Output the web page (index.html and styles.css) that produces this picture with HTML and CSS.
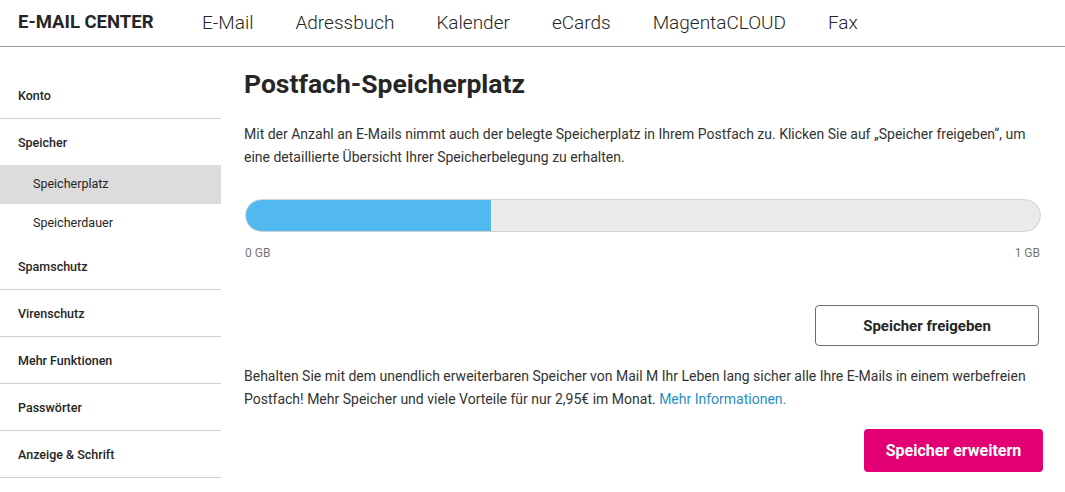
FILE: index.html
```html
<!DOCTYPE html>
<html lang="de">
<head>
<meta charset="utf-8">
<title>E-Mail Center – Postfach-Speicherplatz</title>
<link rel="stylesheet" href="styles.css">
</head>
<body>
<header class="topbar">
  <div class="brand">E-MAIL CENTER</div>
  <nav class="topnav">
    <a class="topnav-item" href="#">E-Mail</a>
    <a class="topnav-item" href="#">Adressbuch</a>
    <a class="topnav-item" href="#">Kalender</a>
    <a class="topnav-item" href="#">eCards</a>
    <a class="topnav-item" href="#">MagentaCLOUD</a>
    <a class="topnav-item" href="#">Fax</a>
  </nav>
</header>
<div class="layout">
  <aside class="sidebar">
    <a class="side-item" href="#">Konto</a>
    <div class="side-group">
      <a class="side-head" href="#">Speicher</a>
      <a class="side-sub active" href="#">Speicherplatz</a>
      <a class="side-sub" href="#">Speicherdauer</a>
    </div>
    <a class="side-item" href="#">Spamschutz</a>
    <a class="side-item" href="#">Virenschutz</a>
    <a class="side-item" href="#">Mehr Funktionen</a>
    <a class="side-item" href="#">Passwörter</a>
    <a class="side-item" href="#">Anzeige &amp; Schrift</a>
  </aside>
  <main class="content">
    <h1 class="title">Postfach-Speicherplatz</h1>
    <p class="text">Mit der Anzahl an E-Mails nimmt auch der belegte Speicherplatz in Ihrem Postfach zu. Klicken Sie auf „Speicher freigeben“, um eine detaillierte Übersicht Ihrer Speicherbelegung zu erhalten.</p>
    <div class="meter">
      <div class="meter-fill" style="width: 30.8%"></div>
    </div>
    <div class="meter-labels">
      <span>0 GB</span>
      <span>1 GB</span>
    </div>
    <div class="actions">
      <button class="btn btn-outline" type="button">Speicher freigeben</button>
    </div>
    <p class="text promo">Behalten Sie mit dem unendlich erweiterbaren Speicher von Mail M Ihr Leben lang sicher alle Ihre E-Mails in einem werbefreien Postfach! Mehr Speicher und viele Vorteile für nur 2,95€ im Monat. <a class="link" href="#">Mehr Informationen.</a></p>
    <div class="actions actions-end">
      <button class="btn btn-primary" type="button">Speicher erweitern</button>
    </div>
  </main>
</div>
</body>
</html>
```

FILE: styles.css
```css
* { box-sizing: border-box; }

html, body {
  margin: 0;
  padding: 0;
  background: #fff;
}

body {
  font-family: Roboto, "Liberation Sans", sans-serif;
  color: #262626;
}

a { text-decoration: none; color: inherit; }

.topbar {
  display: flex;
  align-items: center;
  height: 47px;
  border-bottom: 1px solid #9a9a9a;
  padding: 0 0 2px 18px;
}

.brand {
  font-size: 18.5px;
  font-weight: 700;
  color: #262626;
  width: 184px;
}

.topnav {
  display: flex;
  gap: 42px;
}

.topnav-item {
  font-size: 19px;
  font-weight: 300;
  color: #262626;
}

.layout {
  display: flex;
}

.sidebar {
  width: 221px;
  flex: none;
  display: flex;
  flex-direction: column;
  padding-top: 25px;
}

.side-item,
.side-head {
  display: flex;
  align-items: center;
  height: 47px;
  padding-left: 18px;
  font-size: 12.5px;
  font-weight: 500;
  color: #262626;
  border-bottom: 1px solid #d0d0d0;
}

.side-head { border-bottom: none; height: 46px; }

.side-group {
  display: flex;
  flex-direction: column;
}

.side-sub {
  display: flex;
  align-items: center;
  height: 39px;
  padding: 0 0 2px 33px;
  font-size: 12.5px;
  color: #262626;
}

.side-sub.active { background: #dcdcdc; }

.content {
  flex: 1;
  padding: 0 22px 0 23px;
}

.title {
  margin: 22px 0 0;
  font-size: 26.5px;
  font-weight: 700;
  line-height: 30px;
  color: #262626;
}

.text {
  font-size: 14px;
  line-height: 23px;
  color: #333;
  margin: 24px 0 0;
}

.meter {
  margin: 30px 2px 0 1px;
  height: 33px;
  border: 1px solid #d2d2d2;
  background: #ebebeb;
  border-radius: 17px;
  overflow: hidden;
}

.meter-fill {
  height: 100%;
  background: #52b9f0;
}

.meter-labels {
  display: flex;
  justify-content: space-between;
  margin: 14px 3px 0 1px;
  font-size: 12px;
  color: #777;
}

.actions {
  display: flex;
  justify-content: flex-end;
  margin-top: 45px;
  padding-right: 4px;
}

.btn {
  font-family: inherit;
  cursor: pointer;
  font-weight: 700;
  border-radius: 4px;
}

.btn-outline {
  width: 224px;
  height: 41px;
  background: #fff;
  border: 1px solid #6b6b6b;
  font-size: 15px;
  color: #262626;
}

.promo {
  margin-top: 19px;
}

.link { color: #2a8fc2; }

.actions-end {
  margin-top: 18px;
  padding-right: 0;
}

.btn-primary {
  width: 179px;
  height: 43px;
  background: #e20074;
  border: none;
  color: #fff;
  font-size: 16px;
}
```
